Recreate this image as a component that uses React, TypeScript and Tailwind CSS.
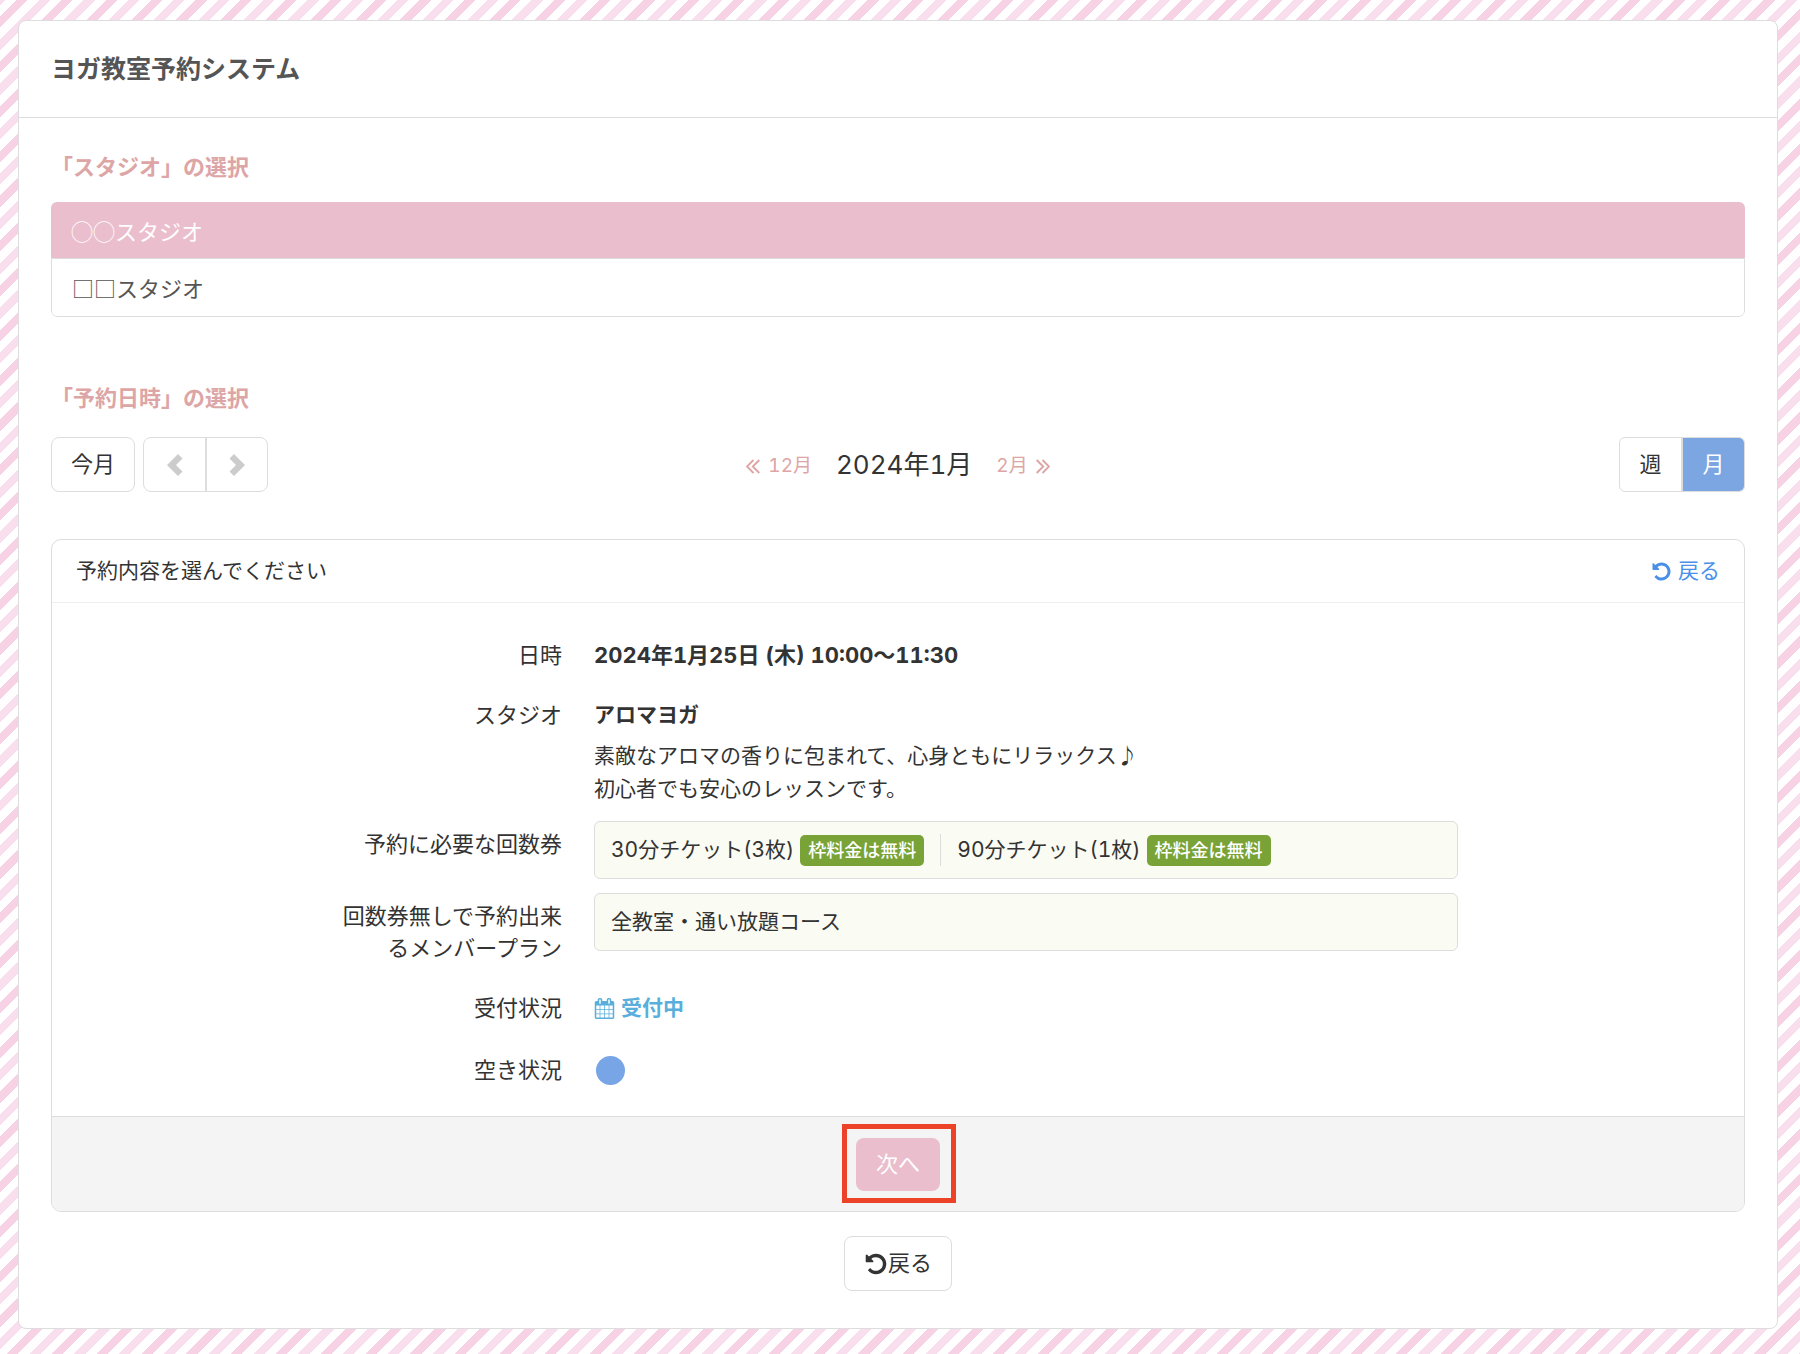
import React, { useState } from 'react';

const studios = ['◯◯スタジオ', '□□スタジオ'];

const tickets = [
  { name: '30分チケット(3枚)', note: '枠料金は無料' },
  { name: '90分チケット(1枚)', note: '枠料金は無料' },
];

const ICONS = {
  undo: 'M1664 896q0 156-61 298t-164 245-245 164-298 61q-172 0-327-72.5t-264-204.5q-7-10-6.5-22.5t8.5-20.5l137-138q10-9 25-9 16 2 23 12 73 95 179 147t225 52q104 0 198.5-40.5t163.5-109.5 109.5-163.5 40.5-198.5-40.5-198.5-109.5-163.5-163.5-109.5-198.5-40.5q-98 0-188 35.5t-160 101.5l137 138q31 30 14 69-17 40-59 40h-448q-26 0-45-19t-19-45v-448q0-42 40-59 39-17 69 14l130 129q107-101 244.5-156.5t284.5-55.5q156 0 298 61t245 164 164 245 61 298z',
  calendar:
    'M192 1664h288v-288h-288v288zm352 0h320v-288h-320v288zm-352-352h288v-320h-288v320zm352 0h320v-320h-320v320zm-352-384h288v-288h-288v288zm736 736h320v-288h-320v288zm-384-736h320v-288h-320v288zm768 736h288v-288h-288v288zm-384-352h320v-320h-320v320zm-352-864v-288q0-13-9.5-22.5t-22.5-9.5h-64q-13 0-22.5 9.5t-9.5 22.5v288q0 13 9.5 22.5t22.5 9.5h64q13 0 22.5-9.5t9.5-22.5zm736 864h288v-320h-288v320zm-384-384h320v-288h-320v288zm384 0h288v-288h-288v288zm32-480v-288q0-13-9.5-22.5t-22.5-9.5h-64q-13 0-22.5 9.5t-9.5 22.5v288q0 13 9.5 22.5t22.5 9.5h64q13 0 22.5-9.5t9.5-22.5zm384-64v1280q0 52-38 90t-90 38h-1408q-52 0-90-38t-38-90v-1280q0-52 38-90t90-38h128v-96q0-66 47-113t113-47h64q66 0 113 47t47 113v96h384v-96q0-66 47-113t113-47h64q66 0 113 47t47 113v96h128q52 0 90 38t38 90z',
};

function Icon({ name, className }: { name: keyof typeof ICONS; className?: string }) {
  return (
    <svg viewBox="0 0 1792 1792" fill="currentColor" className={className} aria-hidden="true">
      <path d={ICONS[name]} />
    </svg>
  );
}

function Chevron({ flip }: { flip?: boolean }) {
  return (
    <svg viewBox="0 0 16 22" fill="currentColor" className="h-[22px] w-4" aria-hidden="true">
      <path d={flip ? 'M5 0L16 11L5 22L0.5 17.5L7 11L0.5 4.5Z' : 'M11 0L0 11L11 22L15.5 17.5L9 11L15.5 4.5Z'} />
    </svg>
  );
}

function DoubleAngle({ flip }: { flip?: boolean }) {
  return (
    <svg
      viewBox="0 0 14 15"
      fill="none"
      stroke="currentColor"
      strokeWidth="1.9"
      className="h-[15px] w-3.5"
      aria-hidden="true"
    >
      <path d={flip ? 'M0.7 1L7.2 7.5L0.7 14M6.5 1L13 7.5L6.5 14' : 'M7.5 1L1 7.5L7.5 14M13.3 1L6.8 7.5L13.3 14'} />
    </svg>
  );
}

function Row({ label, className, children }: { label: string; className?: string; children: React.ReactNode }) {
  return (
    <div className={`grid grid-cols-[542fr_864fr_286fr] ${className ?? ''}`}>
      <dt className="ml-auto max-w-[264px] pr-8 text-right text-[22px] leading-8">{label}</dt>
      <dd className="min-w-0 text-[21px] leading-8">{children}</dd>
    </div>
  );
}

export default function App() {
  const [studio, setStudio] = useState(0);
  const [view, setView] = useState<'week' | 'month'>('month');

  return (
    <div
      lang="ja"
      className="min-h-screen bg-white bg-[repeating-linear-gradient(135deg,#f9dfed_0%,#f9dfed_1.25%,#fff_1.25%,#fff_3.75%,#f7d1e4_3.75%,#f7d1e4_6.25%,#fff_6.25%,#fff_8.75%,#f9dfed_8.75%,#f9dfed_10%)] bg-[length:224px_224px] pt-5 pr-[22px] pb-6 pl-[18px] font-['Inter','Noto_Sans_CJK_JP',sans-serif] text-[#333] tabular-nums"
    >
      <main className="rounded-lg border border-[#ddd] bg-white">
        <header className="border-b border-[#ddd] px-8 py-[30px]">
          <h1 className="text-[25px] leading-9 font-bold text-[#555]">ヨガ教室予約システム</h1>
        </header>

        <div className="px-8 pt-8 pb-[37px]">
          {/* Studio */}
          <h2 className="mb-[18px] text-[22px] leading-[34px] font-bold text-[#dda5a5]">「スタジオ」の選択</h2>
          <ul className="overflow-hidden rounded-md font-['Noto_Sans_CJK_JP',sans-serif] text-[22px]">
            {studios.map((name, i) => (
              <li key={name}>
                <button
                  type="button"
                  onClick={() => setStudio(i)}
                  className={
                    i === studio
                      ? 'block h-14 w-full bg-[#eabecd] px-5 text-left text-white'
                      : 'block h-[59px] w-full rounded-b-md border border-[#ddd] bg-white px-5 text-left text-[#555]'
                  }
                >
                  {name}
                </button>
              </li>
            ))}
          </ul>

          {/* Date */}
          <h2 className="mt-16 mb-[22px] text-[22px] leading-[34px] font-bold text-[#dda5a5]">「予約日時」の選択</h2>
          <div className="grid grid-cols-[1fr_auto_1fr] items-center text-[22px]">
            <div className="flex gap-2">
              <button type="button" className="h-[55px] rounded-lg border border-[#ddd] px-[19px]">
                今月
              </button>
              <div className="flex h-[55px] rounded-lg border border-[#ddd] text-[#ccc]">
                <button type="button" aria-label="前の月" className="grid w-[61px] place-items-center">
                  <Chevron />
                </button>
                <button type="button" aria-label="次の月" className="grid w-[62px] place-items-center border-l-2 border-[#ddd]">
                  <Chevron flip />
                </button>
              </div>
            </div>
            <div className="flex items-center gap-6">
              <a href="#prev" className="flex items-center gap-2 pt-1 text-[19px] text-[#dda5a5]">
                <DoubleAngle />
                12月
              </a>
              <span className="text-[26px] leading-10">2024年1月</span>
              <a href="#next" className="flex items-center gap-2 pt-1 text-[19px] text-[#dda5a5]">
                2月
                <DoubleAngle flip />
              </a>
            </div>
            <div className="ml-auto flex h-[55px] overflow-hidden rounded-md border border-[#ddd]">
              <button
                type="button"
                onClick={() => setView('week')}
                className={view === 'week' ? 'w-[61px] bg-[#7ba6e1] text-white' : 'w-[61px]'}
              >
                週
              </button>
              <button
                type="button"
                onClick={() => setView('month')}
                className={
                  view === 'month'
                    ? 'w-[63px] border-l-2 border-[#ddd] bg-[#7ba6e1] text-white'
                    : 'w-[63px] border-l-2 border-[#ddd]'
                }
              >
                月
              </button>
            </div>
          </div>

          {/* Reservation detail */}
          <section className="mt-[47px] overflow-hidden rounded-[10px] border border-[#ddd]">
            <div className="flex h-[63px] items-center justify-between border-b border-[#eee] px-6 text-[21px]">
              <h3>予約内容を選んでください</h3>
              <a href="#back" className="flex items-center gap-1.5 text-[#4a90e9]">
                <Icon name="undo" className="size-[21px]" />
                戻る
              </a>
            </div>

            <dl className="pt-9 pb-[30px]">
              <Row label="日時">
                <span className="text-[22px] font-bold">2024年1月25日 (木) 10:00〜11:30</span>
              </Row>
              <Row label="スタジオ" className="mt-[27px]">
                <p className="font-bold">アロマヨガ</p>
                <p className="mt-2 leading-[33px]">
                  素敵なアロマの香りに包まれて、心身ともにリラックス♪
                  <br />
                  初心者でも安心のレッスンです。
                </p>
              </Row>
              <Row label="予約に必要な回数券" className="mt-4 [&>dt]:pt-[7px]">
                <div className="flex rounded-md border border-[#ddd] bg-[#fafbf2] px-4 py-3">
                  {tickets.map((ticket, i) => (
                    <div
                      key={ticket.name}
                      className={i > 0 ? 'ml-4 flex items-center border-l border-[#ddd] pl-4' : 'flex items-center'}
                    >
                      {ticket.name}
                      <span className="ml-1.5 h-[31px] rounded-[5px] bg-[#79a336] px-2 text-[18px] leading-[31px] font-medium text-white">
                        {ticket.note}
                      </span>
                    </div>
                  ))}
                </div>
              </Row>
              <Row label="回数券無しで予約出来るメンバープラン" className="mt-3.5 [&>dt]:pt-[7px]">
                <div className="rounded-md border border-[#ddd] bg-[#fafbf2] px-4 py-3">全教室・通い放題コース</div>
              </Row>
              <Row label="受付状況" className="mt-7">
                <span className="flex items-center gap-1.5 font-bold text-[#5aaedb]">
                  <Icon name="calendar" className="size-[21px]" />
                  受付中
                </span>
              </Row>
              <Row label="空き状況" className="mt-[30px]">
                <span
                  role="img"
                  aria-label="空きあり"
                  className="mt-0.5 ml-0.5 block size-[29px] rounded-full bg-[#78a5e6]"
                />
              </Row>
            </dl>

            <div className="flex justify-center border-t border-[#ddd] bg-[#f4f4f4] pt-[21px] pb-5">
              <div className="relative">
                <button type="button" className="h-[53px] rounded-lg bg-[#eabecd] px-5 text-[22px] text-white">
                  次へ
                </button>
                <div className="pointer-events-none absolute -top-3.5 -right-4 -bottom-3 -left-3.5 border-5 border-[#ec4228]" />
              </div>
            </div>
          </section>

          <button
            type="button"
            className="mx-auto mt-6 flex h-[55px] items-center rounded-lg border border-[#ddd] px-[19px] text-[22px]"
          >
            <Icon name="undo" className="size-6" />
            戻る
          </button>
        </div>
      </main>
    </div>
  );
}
